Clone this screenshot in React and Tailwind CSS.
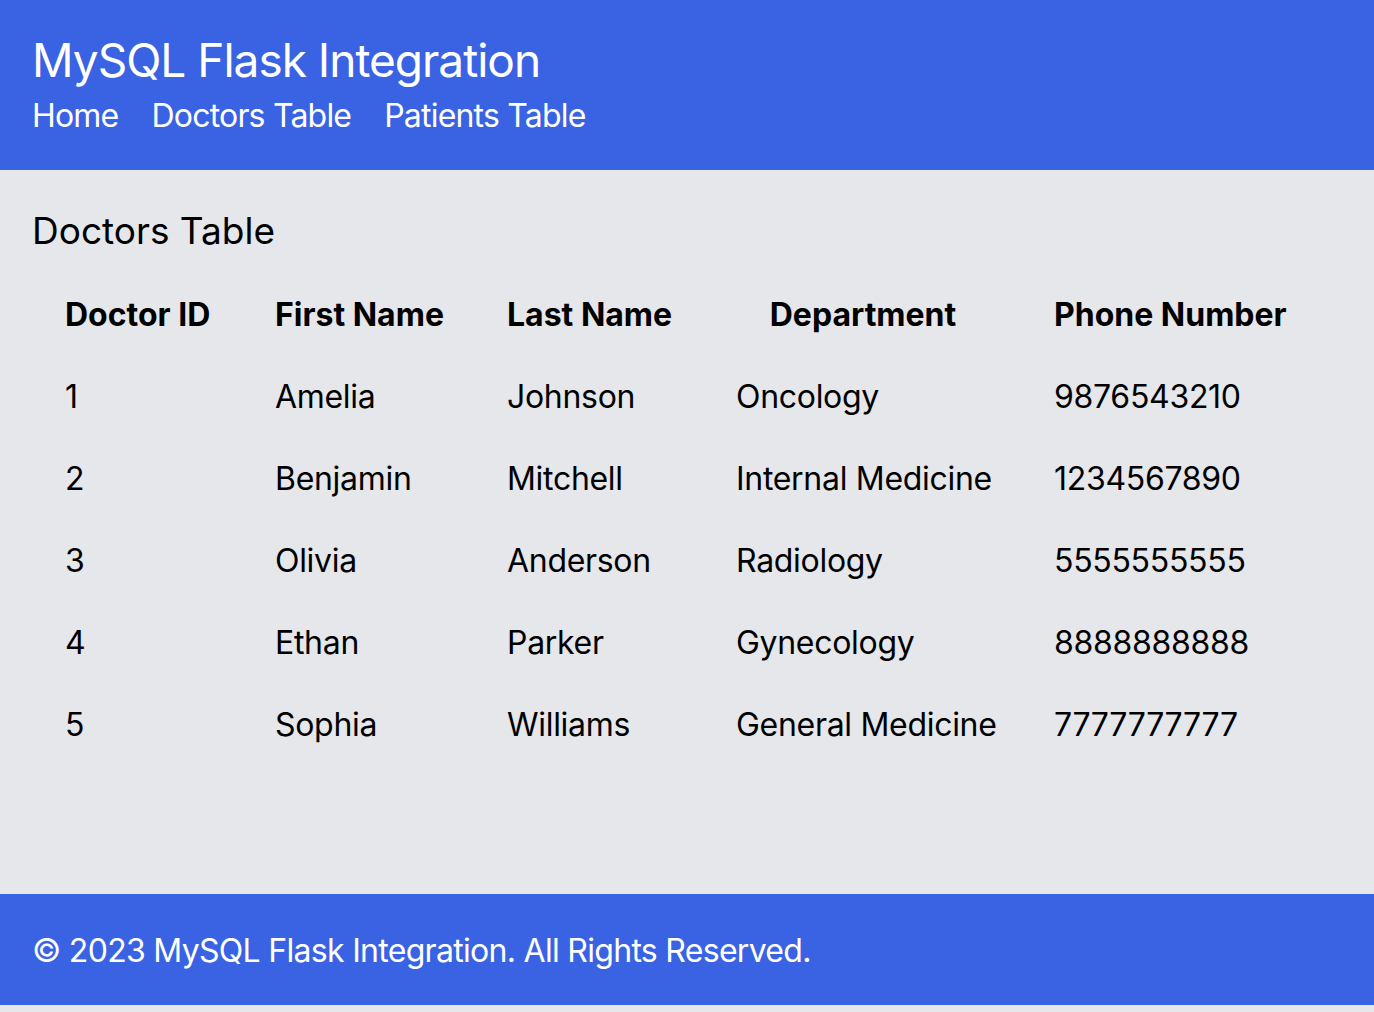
export default function App() {
  const rows = [
    ["1", "Amelia", "Johnson", "Oncology", "9876543210"],
    ["2", "Benjamin", "Mitchell", "Internal Medicine", "1234567890"],
    ["3", "Olivia", "Anderson", "Radiology", "5555555555"],
    ["4", "Ethan", "Parker", "Gynecology", "8888888888"],
    ["5", "Sophia", "Williams", "General Medicine", "7777777777"],
  ];
  return (
    <div className="min-h-[1012px] bg-[#e5e7eb] text-black font-['Inter','Liberation_Sans',sans-serif]">
      <header className="bg-[#3a63e3] text-white px-[32px] pt-[32px] h-[170px]">
        <h1 className="text-[46px] leading-[56px] tracking-[-1px] font-normal">MySQL Flask Integration</h1>
        <nav className="mt-[4px] flex gap-[33px] text-[32px] leading-[48px] tracking-[-0.8px]">
          <a href="#">Home</a>
          <a href="#">Doctors Table</a>
          <a href="#">Patients Table</a>
        </nav>
      </header>
      <main className="h-[724px] px-[32px] pt-[37px]">
        <h2 className="text-[37px] leading-[48px]">Doctors Table</h2>
        <table className="mt-[19px] ml-[1px] w-[1281px] table-fixed text-[32px] leading-[48px] tracking-[-0.3px]">
          <colgroup>
            <col className="w-[210px]" />
            <col className="w-[232px]" />
            <col className="w-[229px]" />
            <col className="w-[318px]" />
            <col className="w-[292px]" />
          </colgroup>
          <thead>
            <tr>
              <th className="h-[82px] px-[32px] text-left font-bold whitespace-nowrap tracking-normal">Doctor ID</th>
              <th className="h-[82px] px-[32px] text-left font-bold whitespace-nowrap tracking-normal">First Name</th>
              <th className="h-[82px] px-[32px] text-left font-bold whitespace-nowrap tracking-normal">Last Name</th>
              <th className="h-[82px] px-[32px] text-center font-bold whitespace-nowrap tracking-normal">Department</th>
              <th className="h-[82px] px-[32px] text-left font-bold whitespace-nowrap tracking-normal">Phone Number</th>
            </tr>
          </thead>
          <tbody>
            {rows.map((r) => (
              <tr key={r[0]}>
                {r.map((c, i) => (
                  <td key={i} className="h-[82px] px-[32px] whitespace-nowrap">{c}</td>
                ))}
              </tr>
            ))}
          </tbody>
        </table>
      </main>
      <footer className="bg-[#3a63e3] text-white px-[32px] pt-[33px] h-[111px] text-[32px] leading-[48px] tracking-[-0.7px]">
        © 2023 MySQL Flask Integration. All Rights Reserved.
      </footer>
    </div>
  );
}
